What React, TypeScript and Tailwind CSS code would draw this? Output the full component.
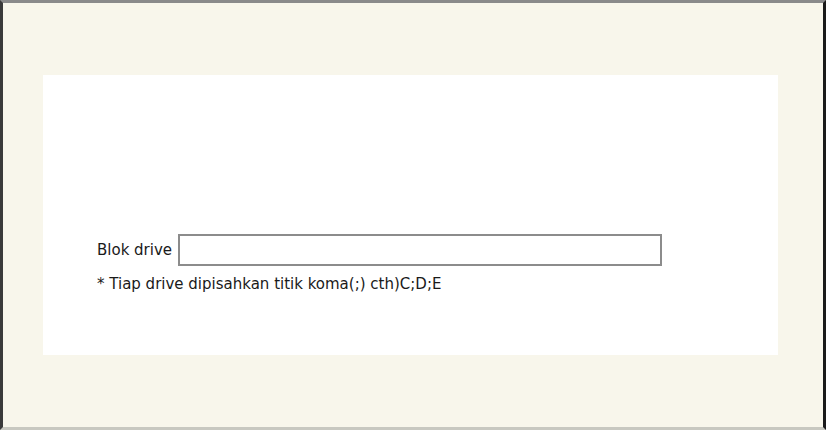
import React from "react";

export default function App() {
  return (
    <div className="w-[826px] h-[430px] bg-[#f8f6eb] border-l-[3px] border-l-[#3a3a3a] border-t-[3px] border-t-[#8a8a8a] border-r-[3px] border-r-[#1a1a1a] border-b-[3px] border-b-[#c8c8c0] box-border pt-[72px] pl-[40px]" style={{ fontFamily: '"DejaVu Sans", Verdana, sans-serif' }}>
      <div className="w-[735px] h-[280px] bg-white pl-[54px] pt-[159px] text-[15px] text-[#1a1a1a]">
        <div className="flex items-center h-[32px]">
          <span className="w-[81px]">Blok drive</span>
          <div className="w-[484px] h-[32px] border-2 border-[#8c8c8c] bg-white"></div>
        </div>
        <div className="mt-[8px] leading-[20px]">* Tiap drive dipisahkan titik koma(;) cth)C;D;E</div>
      </div>
    </div>
  );
}
